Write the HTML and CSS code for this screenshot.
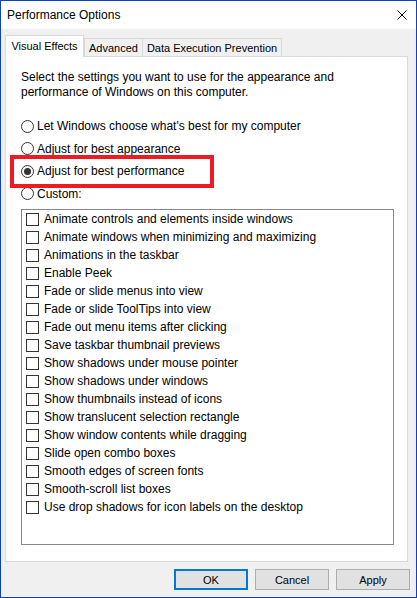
FILE: index.html
```html
<!DOCTYPE html>
<html lang="en">
<head>
<meta charset="utf-8">
<title>Performance Options</title>
<link rel="stylesheet" href="styles.css">
</head>
<body>
<div class="window">
  <div class="titlebar">
    <span class="title">Performance Options</span>
    <svg class="close" width="10" height="10" viewBox="0 0 10 10"><path d="M0.5 0.5 L9.5 9.5 M9.5 0.5 L0.5 9.5" stroke="#000" stroke-width="1" fill="none"/></svg>
  </div>
  <div class="tabs">
    <div class="tab tab-active">Visual Effects</div>
    <div class="tab tab-adv">Advanced</div>
    <div class="tab tab-dep">Data Execution Prevention</div>
  </div>
  <div class="panel">
    <p class="desc">Select the settings you want to use for the appearance and<br>performance of Windows on this computer.</p>
    <div class="radios">
      <div class="radio"><span class="circle"></span>Let Windows choose what's best for my computer</div>
      <div class="radio"><span class="circle"></span>Adjust for best appearance</div>
      <div class="radio radio-marked"><span class="circle checked"></span>Adjust for best performance<span class="highlight"></span></div>
      <div class="radio"><span class="circle"></span>Custom:</div>
    </div>
    <div class="listbox">
      <div class="item"><span class="box"></span>Animate controls and elements inside windows</div>
      <div class="item"><span class="box"></span>Animate windows when minimizing and maximizing</div>
      <div class="item"><span class="box"></span>Animations in the taskbar</div>
      <div class="item"><span class="box"></span>Enable Peek</div>
      <div class="item"><span class="box"></span>Fade or slide menus into view</div>
      <div class="item"><span class="box"></span>Fade or slide ToolTips into view</div>
      <div class="item"><span class="box"></span>Fade out menu items after clicking</div>
      <div class="item"><span class="box"></span>Save taskbar thumbnail previews</div>
      <div class="item"><span class="box"></span>Show shadows under mouse pointer</div>
      <div class="item"><span class="box"></span>Show shadows under windows</div>
      <div class="item"><span class="box"></span>Show thumbnails instead of icons</div>
      <div class="item"><span class="box"></span>Show translucent selection rectangle</div>
      <div class="item"><span class="box"></span>Show window contents while dragging</div>
      <div class="item"><span class="box"></span>Slide open combo boxes</div>
      <div class="item"><span class="box"></span>Smooth edges of screen fonts</div>
      <div class="item"><span class="box"></span>Smooth-scroll list boxes</div>
      <div class="item"><span class="box"></span>Use drop shadows for icon labels on the desktop</div>
    </div>
  </div>
  <div class="buttons">
    <div class="btn btn-default">OK</div>
    <div class="btn">Cancel</div>
    <div class="btn">Apply</div>
  </div>
</div>
</body>
</html>
```

FILE: styles.css
```css
html, body {
  margin: 0;
  padding: 0;
}
body {
  font-family: "Liberation Sans", Arial, sans-serif;
  font-size: 12px;
  color: #000;
  background: #fff;
}
.window {
  width: 417px;
  height: 598px;
  box-sizing: border-box;
  border: 1px solid #1140b8;
  background: #f0f0f0;
  display: flex;
  flex-direction: column;
}
.titlebar {
  height: 28px;
  flex: none;
  background: #fff;
  display: flex;
  align-items: center;
  justify-content: space-between;
  padding: 0 9px 0 6px;
}
.title {
  line-height: 16px;
}
.close {
  display: block;
}
.tabs {
  display: flex;
  align-items: flex-end;
  height: 21px;
  margin: 6px 0 0 4px;
  position: relative;
  z-index: 1;
  flex: none;
  font-size: 11px;
}
.tab {
  height: 18px;
  box-sizing: border-box;
  border: 1px solid #d9d9d9;
  border-bottom: none;
  background: #f0f0f0;
  display: flex;
  align-items: center;
  justify-content: center;
  padding-top: 1px;
  white-space: nowrap;
}
.tab-active {
  width: 79px;
  height: 22px;
  margin-bottom: -1px;
  background: #fff;
  padding-top: 0;
  padding-bottom: 2px;
}
.tab-adv {
  width: 59px;
}
.tab-dep {
  width: 140px;
  margin-left: -1px;
}
.panel {
  height: 506px;
  flex: none;
  box-sizing: border-box;
  margin: 0 8px 0 4px;
  border: 1px solid #d9d9d9;
  background: #fff;
  padding: 0 0 0 15px;
}
.desc {
  margin: 13px 0 0;
  line-height: 15px;
}
.radios {
  margin-top: 15px;
}
.radio {
  height: 22.5px;
  display: flex;
  align-items: center;
  gap: 3px;
  white-space: nowrap;
}
.radio-marked {
  position: relative;
}
.circle {
  width: 13px;
  height: 13px;
  box-sizing: border-box;
  border: 1px solid #333;
  border-radius: 50%;
  background: #fff;
  display: flex;
  align-items: center;
  justify-content: center;
  flex: none;
}
.checked::after {
  content: "";
  width: 7px;
  height: 7px;
  border-radius: 50%;
  background: #333;
}
.highlight {
  position: absolute;
  left: -11px;
  top: -5px;
  width: 204px;
  height: 33px;
  box-sizing: border-box;
  border: 4px solid #ed1c24;
}
.listbox {
  width: 373px;
  height: 336px;
  box-sizing: border-box;
  border: 1px solid #828790;
  margin-top: 4px;
  padding-left: 4px;
}
.item {
  height: 18px;
  display: flex;
  align-items: center;
  gap: 5px;
  white-space: nowrap;
}
.box {
  width: 13px;
  height: 13px;
  box-sizing: border-box;
  border: 1px solid #333;
  background: #fff;
  flex: none;
}
.buttons {
  display: flex;
  justify-content: flex-end;
  gap: 7px;
  margin: 7px 6px 0 0;
  flex: none;
}
.btn {
  width: 74px;
  height: 21px;
  box-sizing: border-box;
  border: 1px solid #adadad;
  background: #e1e1e1;
  display: flex;
  align-items: center;
  justify-content: center;
  font-size: 11px;
}
.btn-default {
  border: 2px solid #0078d7;
}
```
